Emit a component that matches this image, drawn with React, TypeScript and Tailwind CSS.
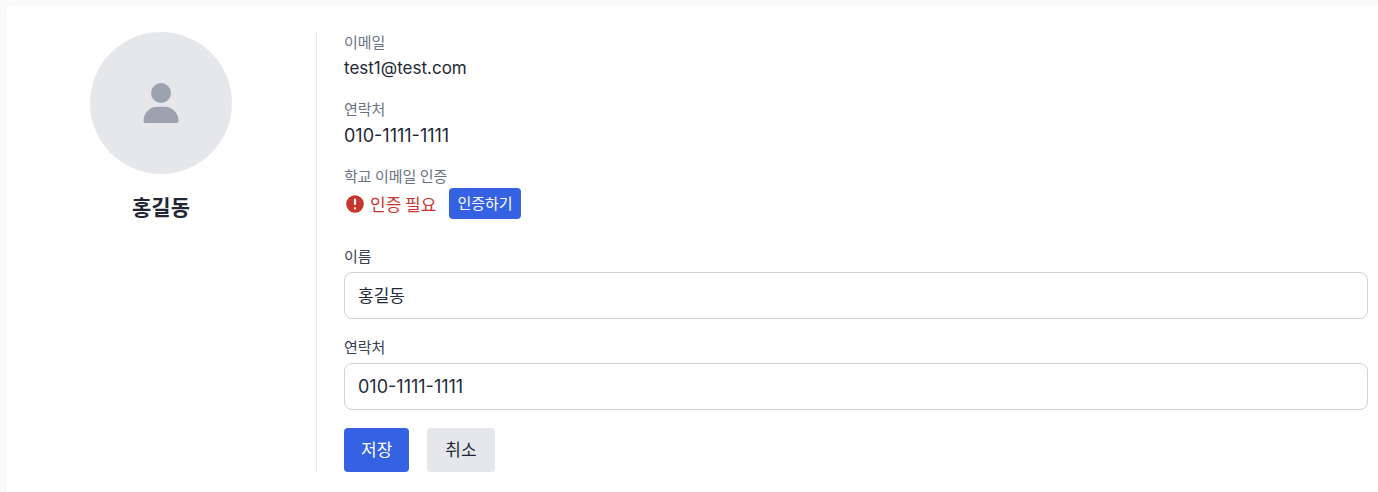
import { useId, useState } from "react";
import type { ReactNode } from "react";
import { FaUser } from "react-icons/fa6";

const latin = "font-['Inter','Noto_Sans_CJK_KR',sans-serif]";

function InfoItem({ label, children }: { label: string; children: ReactNode }) {
  return (
    <div>
      <dt className="mb-0.5 text-[15px] leading-5 text-gray-500">{label}</dt>
      <dd>{children}</dd>
    </div>
  );
}

function Field({
  label,
  value,
  onChange,
  className,
}: {
  label: string;
  value: string;
  onChange: (value: string) => void;
  className: string;
}) {
  const id = useId();
  return (
    <div>
      <label htmlFor={id} className="mb-1.5 block text-[15px] leading-5 text-gray-700">
        {label}
      </label>
      <input
        id={id}
        type="text"
        value={value}
        onChange={(event) => onChange(event.target.value)}
        className={`block h-[47px] w-full rounded-lg border border-[#cdd0d4] bg-white px-[13px] text-[#242b37] outline-none ${className}`}
      />
    </div>
  );
}

function WarningIcon() {
  return (
    <svg viewBox="0 0 20 20" fill="currentColor" className="size-[22px]" aria-hidden="true">
      <path
        fillRule="evenodd"
        clipRule="evenodd"
        d="M18 10a8 8 0 11-16 0 8 8 0 0116 0zm-7 4a1 1 0 11-2 0 1 1 0 012 0zm-1-9a1 1 0 00-1 1v4a1 1 0 102 0V6a1 1 0 00-1-1z"
      />
    </svg>
  );
}

export default function App() {
  const [name, setName] = useState("홍길동");
  const [phone, setPhone] = useState("010-1111-1111");

  return (
    <div className="min-h-screen bg-[#f9fafc] pt-[5px] pl-[6px] font-['Noto_Sans_CJK_KR',sans-serif]">
      <main className="flex min-h-[calc(100vh-5px)] items-start rounded-tl-lg bg-white py-[27px] pr-[10px] shadow-xs">
        <div className="flex w-full">
          <section className="flex w-[311px] shrink-0 flex-col items-center border-r border-gray-200">
            <div className="flex size-[142px] items-center justify-center rounded-full bg-[#e5e7eb] text-[#9da3ae]">
              <FaUser className="size-10" />
            </div>
            <h1 className="mt-[18px] text-[21px] leading-7 font-bold text-[#1f2735]">홍길동</h1>
          </section>

          <section className="min-w-0 flex-1 pl-[27px]">
            <dl className="flex flex-col gap-4">
              <InfoItem label="이메일">
                <span className={`block text-[17px] leading-[29px] text-[#1f2735] ${latin}`}>test1@test.com</span>
              </InfoItem>
              <InfoItem label="연락처">
                <span className={`block text-[18px] leading-[29px] text-[#1f2735] ${latin}`}>010-1111-1111</span>
              </InfoItem>
              <InfoItem label="학교 이메일 인증">
                <div className="flex items-center">
                  <span className="flex items-center gap-1 text-[17px] leading-[29px] text-[#c7362e]">
                    <WarningIcon />
                    인증 필요
                  </span>
                  <button
                    type="button"
                    className="ml-[13px] h-[31px] rounded bg-[#3462e2] px-2 pb-0.5 text-[15px] leading-5 text-white"
                  >
                    인증하기
                  </button>
                </div>
              </InfoItem>
            </dl>

            <form className="mt-[27px] flex flex-col gap-[18px]" onSubmit={(event) => event.preventDefault()}>
              <Field label="이름" value={name} onChange={setName} className="pb-0.5 text-[17px]" />
              <Field label="연락처" value={phone} onChange={setPhone} className={`text-[18px] ${latin}`} />
              <div className="flex gap-[18px]">
                <button type="submit" className="h-[44px] rounded bg-[#3462e2] px-[17px] pb-0.5 text-[17px] leading-6 text-white">
                  저장
                </button>
                <button type="button" className="h-[44px] rounded bg-[#e5e7eb] px-[18px] pb-0.5 text-[17px] leading-6 text-[#1f2735]">
                  취소
                </button>
              </div>
            </form>
          </section>
        </div>
      </main>
    </div>
  );
}
